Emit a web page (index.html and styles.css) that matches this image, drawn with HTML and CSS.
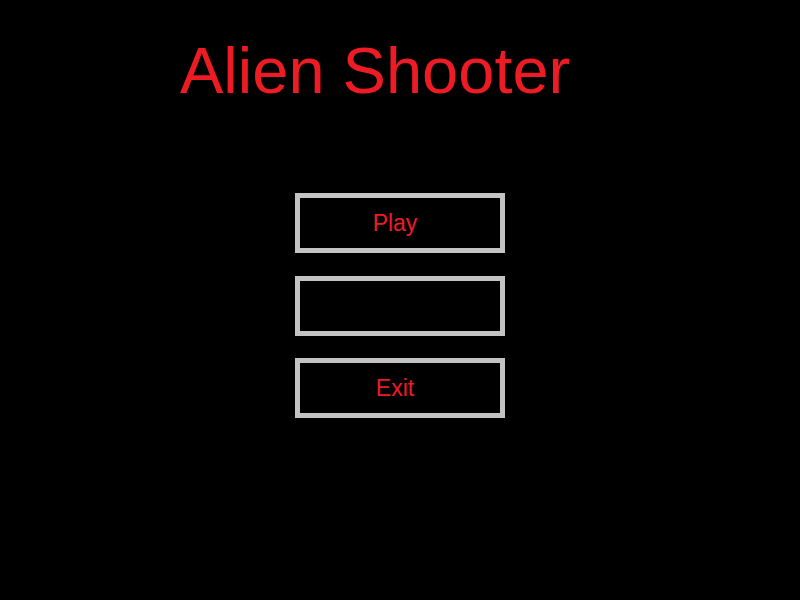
FILE: index.html
```html
<!DOCTYPE html>
<html>
<head>
<meta charset="utf-8">
<link rel="stylesheet" href="styles.css">
</head>
<body>
<div class="screen">
  <h1 class="title">Alien Shooter</h1>
  <div class="menu">
    <div class="btn"><span>Play</span></div>
    <div class="btn"><span></span></div>
    <div class="btn"><span>Exit</span></div>
  </div>
</div>
</body>
</html>
```
FILE: styles.css
```css
html, body {
  margin: 0;
  padding: 0;
  background: #000;
}
.screen {
  width: 800px;
  height: 600px;
  background: #000;
  font-family: "Liberation Sans", Arial, sans-serif;
  display: flex;
  flex-direction: column;
}
.title {
  margin: 0;
  padding: 34px 0 0 180px;
  font-size: 65px;
  font-weight: normal;
  line-height: 74px;
  color: #ed1c24;
}
.menu {
  margin-top: 85px;
  display: flex;
  flex-direction: column;
  align-items: center;
}
.btn {
  box-sizing: border-box;
  width: 210px;
  height: 60px;
  border: 5px solid #c3c3c3;
  display: flex;
  align-items: center;
  justify-content: center;
  padding-right: 10px;
  color: #ed1c24;
  font-size: 23px;
}
.btn + .btn {
  margin-top: 23px;
}
.btn:last-child {
  margin-top: 22px;
}
```
